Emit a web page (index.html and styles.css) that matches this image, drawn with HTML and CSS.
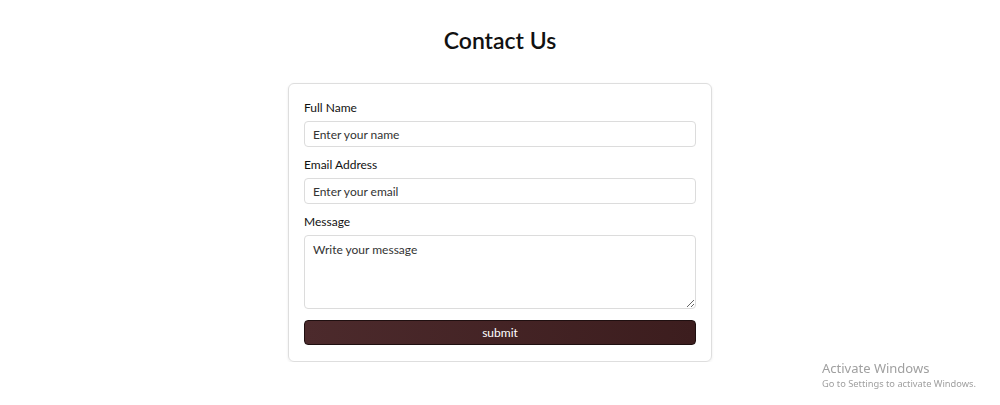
FILE: index.html
```html
<!DOCTYPE html>
<html lang="en">
<head>
    <meta charset="UTF-8">
    <meta name="viewport" content="width=device-width, initial-scale=1.0">
    <title>Contact Us</title>
    <link rel="stylesheet" href="styles.css">
</head>
<body>
    <h1 class="page-title">Contact Us</h1>
    <div class="contact-card">
        <form class="contact-form">
            <div class="form-group">
                <label for="name">Full Name</label>
                <input type="text" id="name" placeholder="Enter your name">
            </div>
            <div class="form-group">
                <label for="email">Email Address</label>
                <input type="email" id="email" placeholder="Enter your email">
            </div>
            <div class="form-group">
                <label for="message">Message</label>
                <textarea id="message" placeholder="Write your message"></textarea>
            </div>
            <button type="button" class="submit-button">submit</button>
        </form>
    </div>

    <div class="activate-windows">
        <div class="activate-title">Activate Windows</div>
        <div class="activate-sub">Go to Settings to activate Windows.</div>
    </div>
</body>
</html>
```

FILE: styles.css
```css
body {
    font-family: Lato, "Open Sans", sans-serif;
    margin: 0;
    padding: 0;
    background-color: #fff;
    color: #111;
}
.page-title {
    text-align: center;
    font-size: 23px;
    font-weight: 600;
    line-height: 30px;
    margin: 25px 0 28px;
}
.contact-card {
    width: 392px;
    margin: 0 auto;
    padding: 16px 15px;
    border: 1px solid #dedede;
    border-radius: 6px;
    box-shadow: 0 1px 3px rgba(0, 0, 0, 0.08);
}
.contact-form {
    display: flex;
    flex-direction: column;
}
.form-group {
    display: flex;
    flex-direction: column;
    margin-bottom: 10px;
}
.form-group label {
    font-size: 12px;
    line-height: 16px;
    margin-bottom: 5px;
    color: #111;
}
.form-group input, .form-group textarea {
    box-sizing: border-box;
    width: 100%;
    font-family: inherit;
    font-size: 12px;
    padding: 4px 8px;
    border: 1px solid #dcdcdc;
    border-radius: 4px;
    color: #222;
}
.form-group input {
    height: 26px;
}
.form-group textarea {
    height: 74px;
    padding-top: 6px;
    resize: vertical;
}
.form-group input::placeholder, .form-group textarea::placeholder {
    color: #333;
}
.submit-button {
    margin-top: 1px;
    height: 25px;
    font-family: inherit;
    font-size: 12px;
    color: #fff;
    background: linear-gradient(90deg, #4c2a2c, #3c1d1e);
    border: 1px solid #1f0f10;
    border-radius: 4px;
    cursor: pointer;
}
.activate-windows {
    position: fixed;
    left: 822px;
    top: 360px;
    font-family: "Noto Sans", sans-serif;
    color: #a0a0a0;
}
.activate-title {
    font-size: 13px;
    line-height: 17px;
}
.activate-sub {
    font-size: 9.3px;
    line-height: 14px;
}
```
